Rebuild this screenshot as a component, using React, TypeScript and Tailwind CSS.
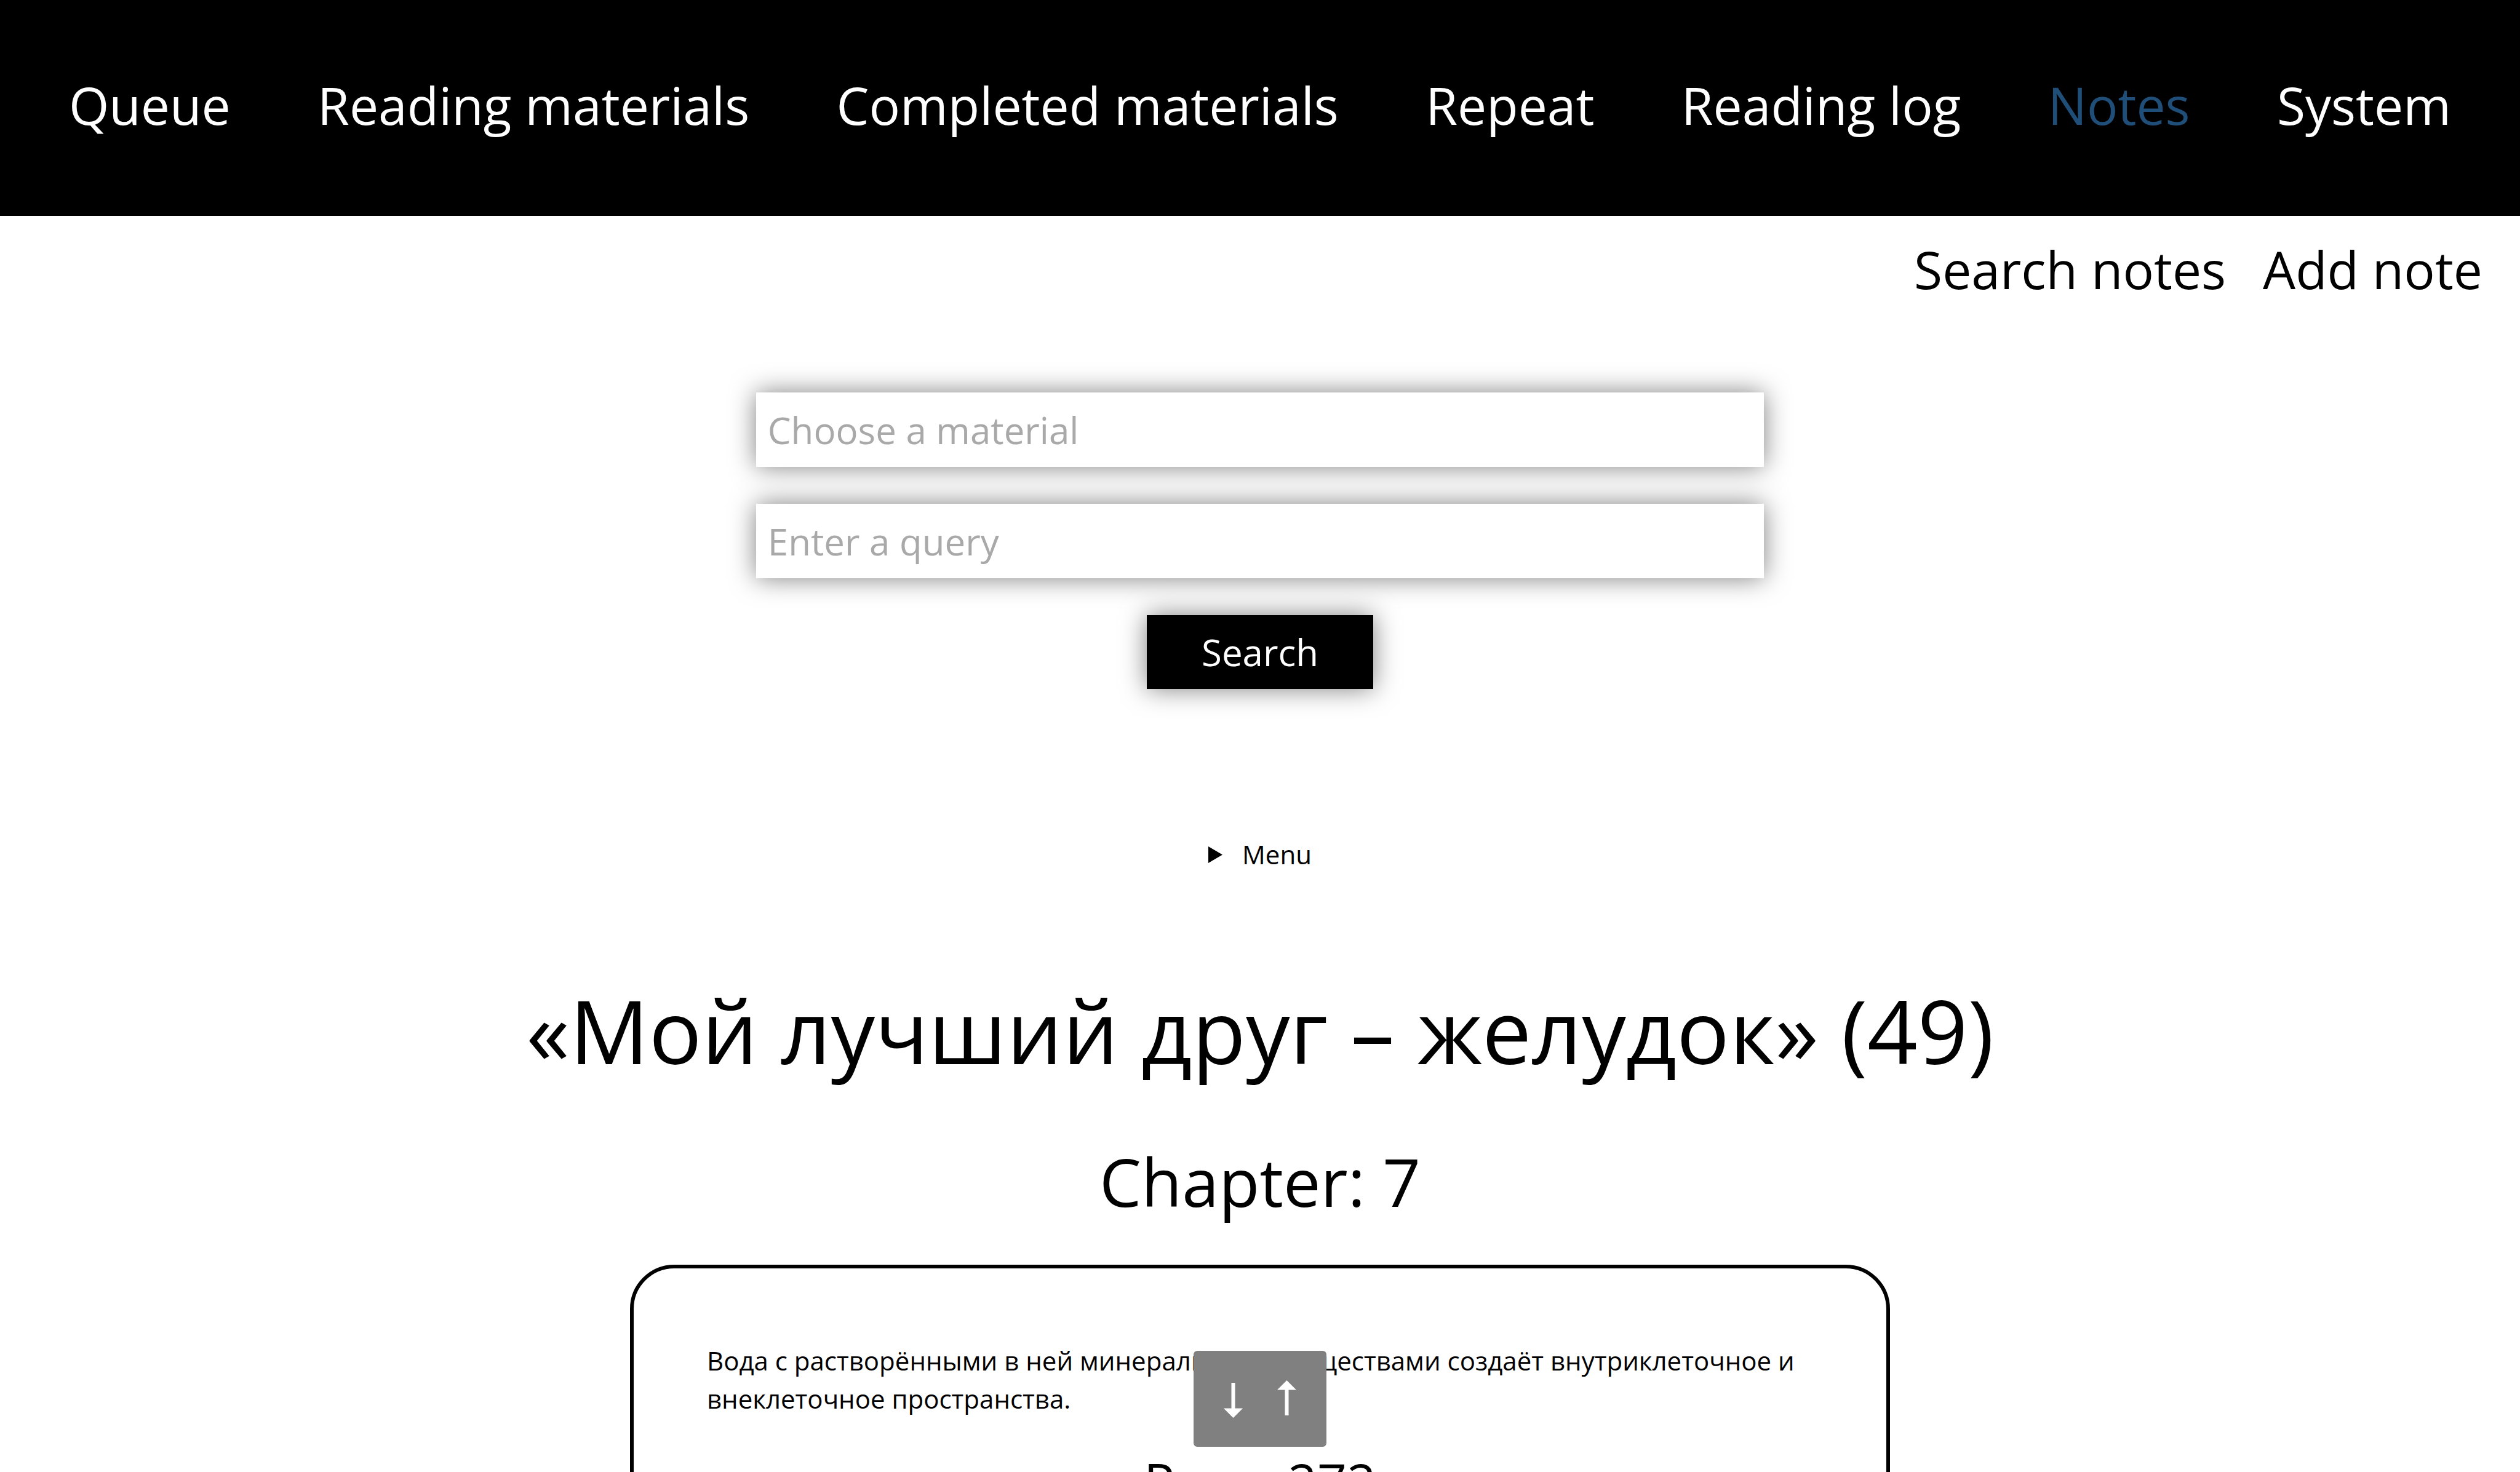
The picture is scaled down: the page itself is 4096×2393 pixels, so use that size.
import React from "react";

const navItems = [
  { label: "Queue" },
  { label: "Reading materials" },
  { label: "Completed materials" },
  { label: "Repeat" },
  { label: "Reading log" },
  { label: "Notes", active: true },
  { label: "System" },
];

function NavBar() {
  return (
    <nav className="flex items-center justify-between bg-black px-[112px] pt-[113px] pb-[123px] text-[84px] leading-[115px] text-white">
      {navItems.map((item) => (
        <a key={item.label} href="#" className={item.active ? "text-[#1f4e79]" : ""}>
          {item.label}
        </a>
      ))}
    </nav>
  );
}

function SearchForm() {
  return (
    <form className="mt-[143px] flex flex-col items-center gap-[60px]" onSubmit={(e) => e.preventDefault()}>
      <input
        aria-label="Choose a material"
        placeholder="Choose a material"
        className="h-[121px] w-2/5 bg-white px-[19px] text-[60px] shadow-[0_0_42px_rgba(0,0,0,0.5)] outline-none placeholder:text-[#a9a9a9]"
      />
      <input
        aria-label="Enter a query"
        placeholder="Enter a query"
        className="h-[121px] w-2/5 bg-white px-[19px] text-[60px] shadow-[0_0_42px_rgba(0,0,0,0.5)] outline-none placeholder:text-[#a9a9a9]"
      />
      <button
        type="submit"
        className="h-[120px] w-[9%] bg-black text-[60px] text-white shadow-[0_0_42px_rgba(0,0,0,0.5)]"
      >
        Search
      </button>
    </form>
  );
}

function ScrollButtons() {
  return (
    <div className="fixed bottom-[41px] left-1/2 flex h-[156px] w-[216px] -translate-x-1/2 items-center justify-center gap-[56px] rounded-[6px] bg-[#808080] text-white">
      <a href="#bottom" aria-label="Scroll to the bottom">
        <svg viewBox="0 0 31 61" className="h-[61px] w-[31px]" fill="currentColor">
          <path d="M12.500 4h6v41.500H31L15.500 61 0 45.500h12.500z" />
        </svg>
      </a>
      <a href="#top" aria-label="Scroll to the top">
        <svg viewBox="0 0 31 61" className="h-[61px] w-[31px]" fill="currentColor">
          <path d="M12.500 57h6V15.500H31L15.500 0 0 15.500h12.500z" />
        </svg>
      </a>
    </div>
  );
}

export default function App() {
  return (
    <div id="top" className="h-screen overflow-hidden bg-white font-['Open_Sans',sans-serif] text-black">
      <NavBar />
      <div className="flex justify-end gap-[60px] px-[61px] pt-[29px] text-[84px] leading-[115px]">
        <a href="#">Search notes</a>
        <a href="#">Add note</a>
      </div>
      <main>
        <SearchForm />
        <details className="mt-[239px] text-center text-[42px] leading-[60px]">
          <summary className="flex cursor-pointer list-none items-center justify-center gap-[32px]">
            <svg viewBox="0 0 23 27" className="h-[27px] w-[23px]" fill="currentColor">
              <path d="M0 0 23 13.500 0 27z" />
            </svg>
            Menu
          </summary>
        </details>
        <h1 className="mt-[158px] text-center text-[143px] leading-[196px]">«Мой лучший друг – желудок» (49)</h1>
        <h2 className="mt-[74px] text-center text-[108px] leading-[147px]">Chapter: 7</h2>
        <article className="mx-auto mt-[62px] w-1/2 rounded-[72px] border-[6px] border-black px-[119px] pt-[119px] pb-[120px]">
          <p className="text-[42px] leading-[62px]">
            Вода с растворёнными в ней минеральными веществами создаёт внутриклеточное и внеклеточное пространства.
          </p>
          <h3 className="mt-[46px] text-center text-[84px] leading-[115px]">Page: 272</h3>
        </article>
      </main>
      <ScrollButtons />
    </div>
  );
}
